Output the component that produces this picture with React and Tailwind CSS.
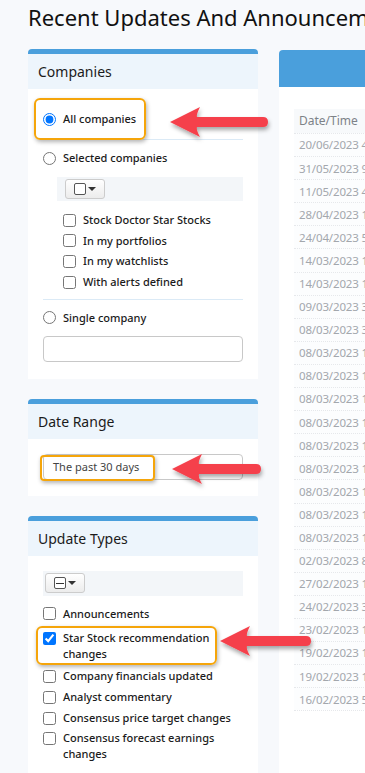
import React from "react";

const font = { fontFamily: '"Noto Sans", "Open Sans", sans-serif' };

const rows = [
  "20/06/2023 4:15 PM",
  "31/05/2023 9:02 AM",
  "11/05/2023 4:30 PM",
  "28/04/2023 1:12 PM",
  "24/04/2023 5:45 PM",
  "14/03/2023 1:20 PM",
  "14/03/2023 1:05 PM",
  "09/03/2023 3:40 PM",
  "08/03/2023 3:10 PM",
  "08/03/2023 1:58 PM",
  "08/03/2023 1:57 PM",
  "08/03/2023 1:56 PM",
  "08/03/2023 1:55 PM",
  "08/03/2023 1:54 PM",
  "08/03/2023 1:53 PM",
  "08/03/2023 1:52 PM",
  "08/03/2023 1:51 PM",
  "08/03/2023 1:50 PM",
  "02/03/2023 8:30 AM",
  "27/02/2023 1:15 PM",
  "24/02/2023 3:25 PM",
  "23/02/2023 1:40 PM",
  "19/02/2023 1:22 PM",
  "19/02/2023 1:10 PM",
  "16/02/2023 5:05 PM",
];

function PanelHeader({ title }) {
  return (
    <>
      <div className="h-[5px] rounded-t-[4px] bg-[#4a9fdc]" />
      <div className="flex h-[35px] items-center bg-[#edf5fc] px-[10px] text-[14px] text-[#1b1b1b]">
        {title}
      </div>
    </>
  );
}

function Check({ label, checked, two }) {
  return (
    <div className={`flex ${two ? "items-start" : "items-center"} gap-[7px]`}>
      <input
        type="checkbox"
        readOnly
        checked={!!checked}
        className={`m-0 h-[13px] w-[13px] shrink-0 ${two ? "mt-[2px]" : ""}`}
      />
      <span className="text-[11px] font-medium leading-[16px] text-[#1b1b1b]">{label}</span>
    </div>
  );
}

function Radio({ label, checked }) {
  return (
    <div className="flex items-center gap-[7px]">
      <input type="radio" readOnly checked={!!checked} className="m-0 h-[13px] w-[13px]" />
      <span className="text-[11px] font-medium text-[#1b1b1b]">{label}</span>
    </div>
  );
}

function Arrow({ tipX, endX, cy }) {
  const w = endX - tipX + 10;
  return (
    <svg
      className="pointer-events-none absolute"
      style={{ left: tipX - 2, top: cy - 18 }}
      width={w + 6}
      height={42}
      viewBox={`0 0 ${w + 6} 42`}
    >
      <defs>
        <filter id={`sh${cy}`} x="-10%" y="-30%" width="130%" height="170%">
          <feDropShadow dx="1" dy="3" stdDeviation="2" floodColor="#000" floodOpacity="0.35" />
        </filter>
      </defs>
      <g filter={`url(#sh${cy})`}>
        <path
          d={`M2 18 L32 3 Q28 11 29 13 L${w - 4} 13 Q${w + 1} 13 ${w + 1} 18 Q${w + 1} 23 ${w - 4} 23 L29 23 Q28 26 32 33 Z`}
          fill="#f5404b"
        />
      </g>
    </svg>
  );
}

export default function App() {
  return (
    <div className="relative min-h-[773px] w-[365px] overflow-hidden bg-[#f7f9fc]" style={font}>
      <h1 className="whitespace-nowrap pl-[28px] pt-[2px] text-[22px] font-normal leading-[30px] text-[#111]">
        Recent Updates And Announcements
      </h1>
      <div className="mt-[17px] flex w-[900px] items-start gap-[21px] pl-[28px]">
        {/* Left column */}
        <div className="flex w-[230px] shrink-0 flex-col gap-[20px]">
          {/* Companies */}
          <div>
            <PanelHeader title="Companies" />
            <div className="bg-white px-[15px] pb-[17px]">
              <div className="flex h-[51px] items-center border-b border-[#dbeaf6] pt-[11px]">
                <Radio label="All companies" checked />
              </div>
              <div className="flex h-[36px] items-center pt-[1px]">
                <Radio label="Selected companies" />
              </div>
              <div className="ml-[14px] mt-[1px] flex h-[24px] items-center bg-[#f3f6f9] pl-[8px]">
                <div className="flex h-[20px] w-[40px] items-center justify-center gap-[2px] rounded-[3px] border border-[#ccc] bg-gradient-to-b from-white to-[#ececec]">
                  <span className="h-[12px] w-[12px] rounded-[2px] border border-[#555] bg-white" />
                  <span className="h-0 w-0 border-x-[4px] border-t-[4px] border-x-transparent border-t-[#333]" />
                </div>
              </div>
              <div className="ml-[20px] mt-[11px] flex flex-col">
                <div className="h-[20.7px]"><Check label="Stock Doctor Star Stocks" /></div>
                <div className="h-[20.7px]"><Check label="In my portfolios" /></div>
                <div className="h-[20.7px]"><Check label="In my watchlists" /></div>
                <div className="h-[20.7px]"><Check label="With alerts defined" /></div>
              </div>
              <div className="mt-[4px] border-t border-[#dbeaf6]" />
              <div className="flex h-[36px] items-center">
                <Radio label="Single company" />
              </div>
              <div className="h-[26px] rounded-[4px] border border-[#c8c8c8] bg-white" />
            </div>
          </div>

          {/* Date Range */}
          <div>
            <PanelHeader title="Date Range" />
            <div className="bg-white px-[15px] pb-[16px] pt-[15px]">
              <div className="flex h-[26px] items-center justify-between rounded-[4px] border border-[#c8c8c8] bg-white pl-[9px] pr-[8px]">
                <span className="text-[11px] text-[#444]">The past 30 days</span>
                <span className="text-[8px] leading-none text-[#aaa]">⇕</span>
              </div>
            </div>
          </div>

          {/* Update Types */}
          <div>
            <PanelHeader title="Update Types" />
            <div className="bg-white px-[15px] pb-[40px] pt-[15px]">
              <div className="flex h-[25px] items-center bg-[#f3f6f9] pl-[2px]">
                <div className="flex h-[20px] w-[40px] items-center justify-center gap-[2px] rounded-[3px] border border-[#ccc] bg-gradient-to-b from-white to-[#ececec]">
                  <span className="flex h-[12px] w-[12px] items-center justify-center rounded-[2px] border border-[#555] bg-white">
                    <span className="h-[1.5px] w-[8px] bg-[#333]" />
                  </span>
                  <span className="h-0 w-0 border-x-[4px] border-t-[4px] border-x-transparent border-t-[#333]" />
                </div>
              </div>
              <div className="mt-[8px] flex flex-col">
                <div className="flex h-[20px] items-center"><Check label="Announcements" /></div>
                <div className="mt-[6px] h-[36px]"><Check label={<>Star Stock recommendation<br />changes</>} checked two /></div>
                <div className="flex h-[21px] items-center"><Check label="Company financials updated" /></div>
                <div className="flex h-[21px] items-center"><Check label="Analyst commentary" /></div>
                <div className="flex h-[21px] items-center"><Check label="Consensus price target changes" /></div>
                <div className="mt-[1px]"><Check label={<>Consensus forecast earnings<br />changes</>} two /></div>
              </div>
            </div>
          </div>
        </div>

        {/* Right panel */}
        <div className="w-[600px] shrink-0 pt-[1px]">
          <div className="h-[37px] rounded-t-[4px] bg-[#4a9fdc]" />
          <div className="h-[700px] bg-white px-[15px] pt-[22px]">
            <div className="flex h-[24px] items-center bg-[#f7f9fb] pl-[5px] text-[12px] text-[#7d8288]">
              Date/Time
            </div>
            {rows.map((r, i) => (
              <div
                key={i}
                className="flex h-[23.1px] items-center whitespace-pre border-t border-dotted border-[#e6e8eb] bg-[#fcfdfe] pl-[5px] text-[11.5px] tracking-[-0.15px] text-[#a3a7ad]"
              >
                {r}
              </div>
            ))}
            <div className="border-t border-dotted border-[#e6e8eb]" />
          </div>
        </div>
      </div>

      {/* Annotations */}
      <div className="pointer-events-none absolute left-[34px] top-[98px] h-[42px] w-[112px] rounded-[6px] border-2 border-[#f5a50a] shadow-[1px_2px_4px_rgba(0,0,0,0.3)]" />
      <div className="pointer-events-none absolute left-[40px] top-[455px] h-[26px] w-[115px] rounded-[4px] border-2 border-[#f5a50a] shadow-[1px_2px_4px_rgba(0,0,0,0.3)]" />
      <div className="pointer-events-none absolute left-[36px] top-[626px] h-[39px] w-[181px] rounded-[6px] border-2 border-[#f5a50a] shadow-[1px_2px_4px_rgba(0,0,0,0.3)]" />
      <Arrow tipX={170} endX={259} cy={122} />
      <Arrow tipX={172} endX={252} cy={469} />
      <Arrow tipX={220} endX={302} cy={641} />
    </div>
  );
}
